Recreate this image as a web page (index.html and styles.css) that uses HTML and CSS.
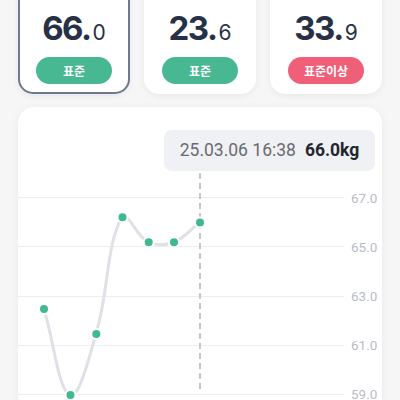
FILE: index.html
```html
<!DOCTYPE html>
<html lang="ko">
<head>
<meta charset="utf-8">
<link rel="stylesheet" href="styles.css">
</head>
<body>
<div class="page">
  <div class="stats">
    <div class="card active">
      <div class="value"><b>66.</b><span>0</span></div>
      <div class="badge ok">표준</div>
    </div>
    <div class="card">
      <div class="value"><b>23.</b><span>6</span></div>
      <div class="badge ok">표준</div>
    </div>
    <div class="card">
      <div class="value"><b>33.</b><span>9</span></div>
      <div class="badge high">표준이상</div>
    </div>
  </div>
  <div class="chart-card">
    <div class="tooltip"><span class="date">25.03.06 16:38</span><b>66.0kg</b></div>
    <svg class="chart" width="364" height="300" viewBox="18 108 364 300">
      <g class="grid">
        <line x1="18" x2="344" y1="198.5" y2="198.5"/>
        <line x1="18" x2="344" y1="247.5" y2="247.5"/>
        <line x1="18" x2="344" y1="297.5" y2="297.5"/>
        <line x1="18" x2="344" y1="346.5" y2="346.5"/>
        <line x1="18" x2="344" y1="395.5" y2="395.5"/>
      </g>
      <g class="ylab">
        <text x="351" y="203.5">67.0</text>
        <text x="351" y="252.5">65.0</text>
        <text x="351" y="302">63.0</text>
        <text x="351" y="351">61.0</text>
        <text x="351" y="400">59.0</text>
      </g>
      <line class="cursor" x1="200" x2="200" y1="174" y2="394"/>
      <path class="curve" d="M44,310 C54.4,344.4 58,390.25 70,396 C78.84,400.25 88.6,360.35 96,335 C109.4,289.15 106,246.3 122,218 C126.8,209.5 135.9,237.2 148,243 C156.7,247.2 164.8,246.5 174,243 C185.6,238.5 189.6,231 200,223"/>
      <g class="dots">
        <circle cx="44" cy="310" r="5"/>
        <circle cx="70.5" cy="396" r="5"/>
        <circle cx="96.3" cy="335" r="5"/>
        <circle cx="122.5" cy="218.3" r="5"/>
        <circle cx="148.7" cy="243.3" r="5"/>
        <circle cx="174" cy="243.3" r="5"/>
        <circle cx="200" cy="223.5" r="5"/>
      </g>
    </svg>
  </div>
</div>
</body>
</html>
```
FILE: styles.css
```css
html, body {
  margin: 0;
  padding: 0;
}
body {
  background: #f6f6f7;
  font-family: Inter, "Noto Sans CJK KR", sans-serif;
  color: #283046;
  width: 400px;
  height: 400px;
  overflow: hidden;
}
.page {
  padding: 0 18px;
}
.stats {
  display: grid;
  grid-template-columns: repeat(3, 1fr);
  gap: 14px;
  margin-top: -20px;
}
.card {
  background: #fff;
  border: 2.5px solid transparent;
  border-radius: 15px;
  padding: 25.8px 16px 7.5px;
  display: flex;
  flex-direction: column;
  align-items: center;
  box-shadow: 0 2px 6px rgba(0, 0, 0, 0.06);
}
.card.active {
  border-color: #6d7a8e;
}
.value {
  height: 40px;
  line-height: 40px;
  white-space: nowrap;
  letter-spacing: -1.5px;
}
.value b {
  font-size: 33px;
  font-weight: 700;
}
.value span {
  font-size: 21px;
  font-weight: 400;
  margin-left: 2px;
  letter-spacing: 0;
}
.badge {
  margin-top: 9.7px;
  width: 76px;
  height: 27px;
  border-radius: 14px;
  color: #fff;
  font-family: "Noto Sans CJK KR", sans-serif;
  font-weight: 700;
  font-size: 12px;
  display: flex;
  align-items: center;
  justify-content: center;
}
.badge.ok {
  background: #48b893;
}
.badge.high {
  background: #f05f78;
}
.chart-card {
  position: relative;
  margin-top: 13px;
  background: #fff;
  border-radius: 16px;
  height: 320px;
  box-shadow: 0 2px 8px rgba(0, 0, 0, 0.06);
  overflow: hidden;
}
.chart {
  display: block;
}
.tooltip {
  position: absolute;
  top: 23px;
  right: 7px;
  width: 211px;
  height: 41px;
  background: #f0f1f4;
  border-radius: 8px;
  display: flex;
  align-items: center;
  justify-content: center;
  gap: 9px;
  font-family: Roboto, sans-serif;
  font-size: 17.5px;
}
.tooltip .date {
  color: #6a6b70;
}
.tooltip b {
  color: #24262d;
  font-weight: 700;
}
.grid line {
  stroke: #ededf0;
  stroke-width: 1;
}
.ylab text {
  font-family: Roboto, sans-serif;
  font-size: 13.5px;
  fill: #b9bcc5;
}
.cursor {
  stroke: #c6c8cd;
  stroke-width: 2;
  stroke-dasharray: 6 4;
}
.curve {
  fill: none;
  stroke: #dfe1e6;
  stroke-width: 3;
  stroke-linecap: round;
}
.dots circle {
  fill: #41b98f;
  stroke: #fff;
  stroke-width: 2;
}
```
